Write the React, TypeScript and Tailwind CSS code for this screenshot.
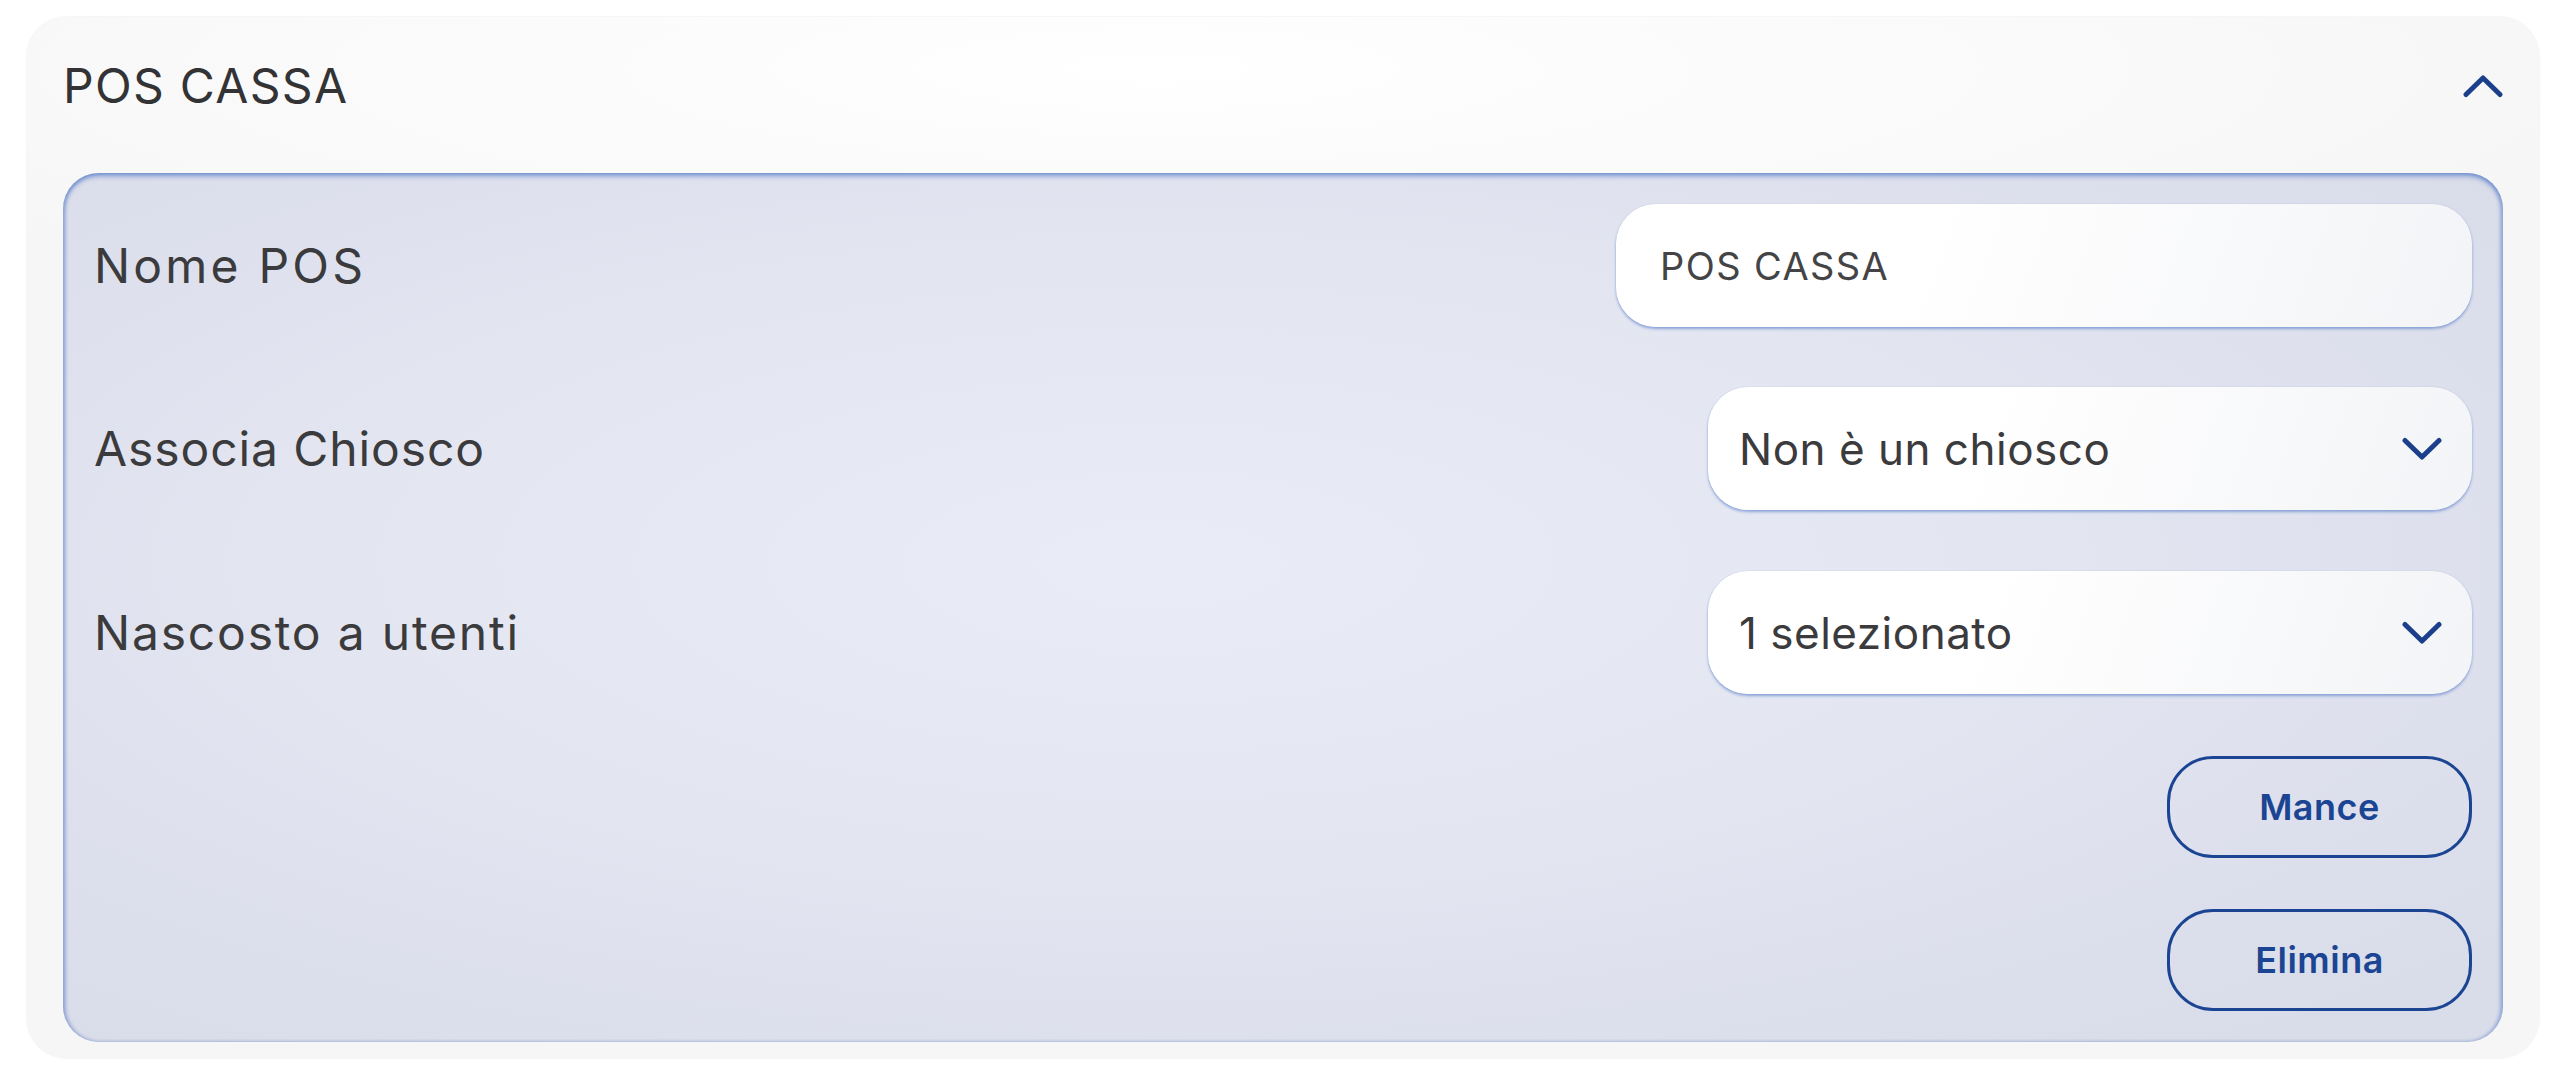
import React from "react";

const font = { fontFamily: "Inter, 'Noto Sans', sans-serif" };

function ChevronDown() {
  return (
    <svg width="40" height="24" viewBox="0 0 40 24" fill="none">
      <polyline
        points="3,3.5 20,20 37,3.5"
        stroke="#1c3f8c"
        strokeWidth="5"
        strokeLinecap="round"
        strokeLinejoin="round"
      />
    </svg>
  );
}

function ChevronUp() {
  return (
    <svg width="40" height="24" viewBox="0 0 40 24" fill="none">
      <polyline
        points="3,20.5 20,4 37,20.5"
        stroke="#1c3f8c"
        strokeWidth="5"
        strokeLinecap="round"
        strokeLinejoin="round"
      />
    </svg>
  );
}

const fieldCls =
  "h-[123px] rounded-[40px] bg-[linear-gradient(110deg,#ffffff_35%,#f3f4f7_100%)] shadow-[0_2px_3px_rgba(80,120,200,0.6),0_0_1px_rgba(80,120,200,0.35)] flex items-center";

function Row({ label, track, children }: { label: string; track: string; children: React.ReactNode }) {
  return (
    <div className="flex items-center justify-between h-[123px]">
      <span className={`text-[48px] leading-none ${track} text-[#3b3b3d]`}>{label}</span>
      {children}
    </div>
  );
}

function Select({ value }: { value: string }) {
  return (
    <div className={`${fieldCls} w-[764px] pl-[31px] pr-[30px] justify-between`}>
      <span className="text-[44px] leading-none tracking-[0.5px] text-[#3b3b3d]">{value}</span>
      <ChevronDown />
    </div>
  );
}

function OutlineButton({ label }: { label: string }) {
  return (
    <button className="w-[305px] h-[102px] rounded-[46px] border-[3px] border-[#1b4593] text-[36px] font-semibold tracking-[0.5px] text-[#1b4593] flex items-center justify-center leading-none">
      {label}
    </button>
  );
}

export default function App() {
  return (
    <div className="w-[2564px] h-[1080px] bg-white pt-[17px] pl-[27px]" style={font}>
      <div className="w-[2512px] h-[1041px] rounded-[40px] bg-[radial-gradient(ellipse_60%_25%_at_45%_5%,#ffffff_0%,#f6f6f6_100%)] shadow-[0_0_2px_rgba(0,0,0,0.14)] px-[36px] pb-[16px] flex flex-col">
        <div className="h-[138px] flex items-center justify-between shrink-0">
          <span className="text-[48px] leading-none tracking-[1.3px] text-[#333335]">POS CASSA</span>
          <ChevronUp />
        </div>
        <div className="mt-[18px] h-[869px] rounded-[36px] bg-[radial-gradient(ellipse_70%_70%_at_45%_45%,#e9ecf6_0%,#e4e7f2_45%,#d9dce9_100%)] shadow-[inset_0_3px_5px_rgba(80,120,200,0.7),inset_3px_0_3px_rgba(80,120,200,0.3),inset_-3px_0_3px_rgba(80,120,200,0.3)] px-[31px] pt-[31px] flex flex-col">
          <Row label="Nome POS" track="tracking-[3.2px]">
            <div className={`${fieldCls} w-[856px] pl-[44px]`}>
              <span className="text-[38px] leading-none tracking-[1.4px] text-[#444446]">POS CASSA</span>
            </div>
          </Row>
          <div className="mt-[60px]">
            <Row label="Associa Chiosco" track="tracking-[0.9px]">
              <Select value="Non è un chiosco" />
            </Row>
          </div>
          <div className="mt-[61px]">
            <Row label="Nascosto a utenti" track="tracking-[1.8px]">
              <Select value="1 selezionato" />
            </Row>
          </div>
          <div className="mt-[62px] flex justify-end">
            <OutlineButton label="Mance" />
          </div>
          <div className="mt-[51px] flex justify-end">
            <OutlineButton label="Elimina" />
          </div>
        </div>
      </div>
    </div>
  );
}
